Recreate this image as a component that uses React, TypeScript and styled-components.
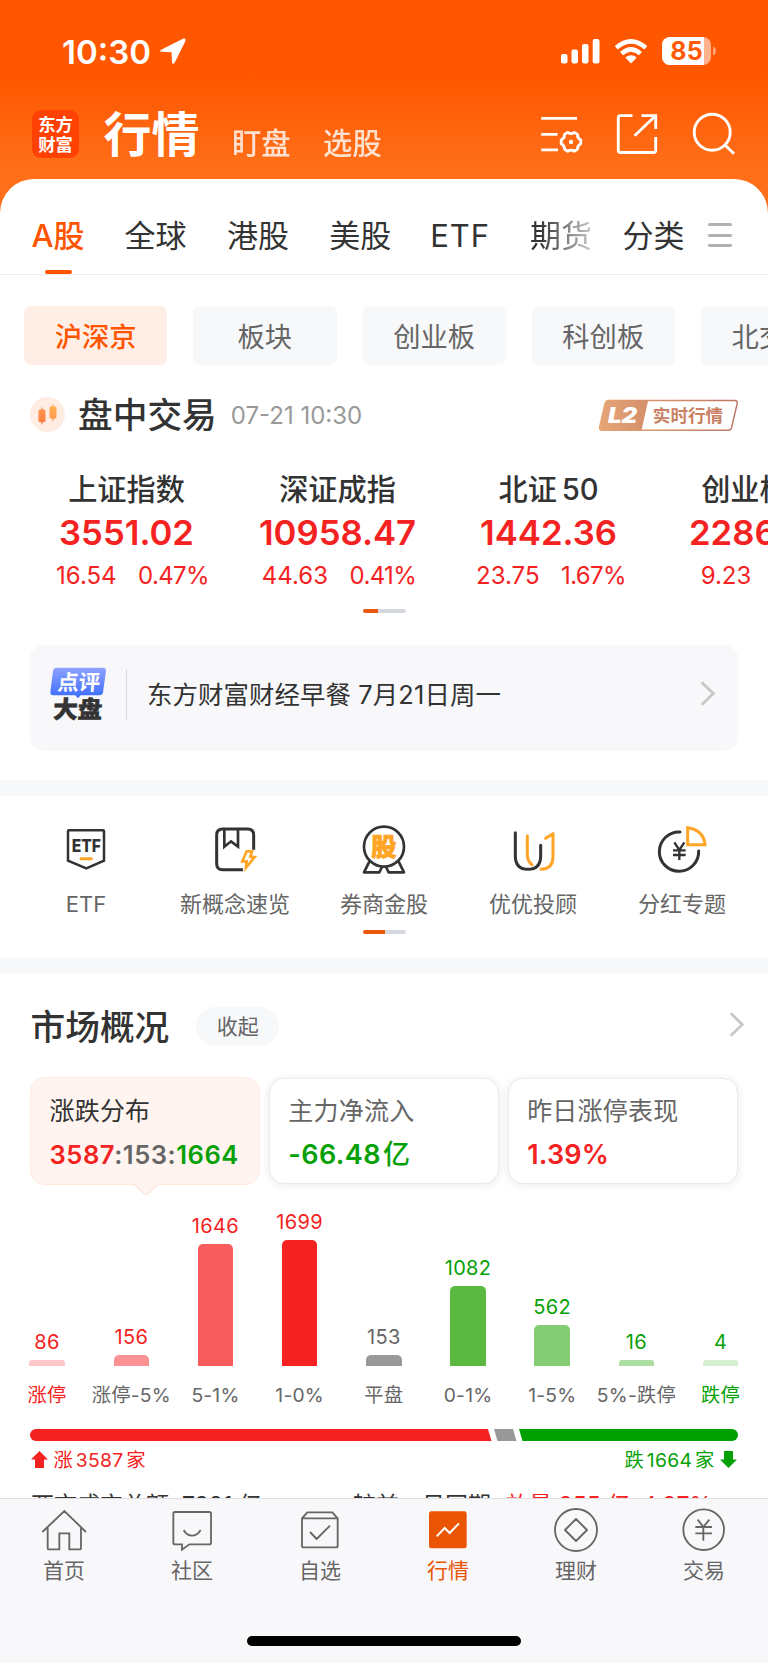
import React from "react";
import styled, { createGlobalStyle } from "styled-components";

const RED = "#f52222";
const GREEN = "#06a106";
const ORANGE = "#ff5500";
const INK = "#333333";
const GRAY = "#666666";

const Global = createGlobalStyle`
  * { box-sizing: border-box; }
  body { margin: 0; background: #fff; }
`;

const Page = styled.div`
  width: 768px;
  height: 1663px;
  display: flex;
  flex-direction: column;
  overflow: hidden;
  font-family: Inter, "Noto Sans CJK SC", sans-serif;
  color: ${INK};
  white-space: nowrap;
  background: linear-gradient(180deg, #ff5500 0, #ff5700 78px, #ff6e18 165px, #ff701b 230px);
  svg { display: block; flex: none; overflow: visible; }
`;

const StatusBar = styled.div`
  height: 102px;
  padding: 0 52px 0 62px;
  display: flex;
  align-items: center;
  color: #fff;
`;
const Clock = styled.span`
  width: 97.5px;
  padding-top: 1px;
  font-size: 33px;
  font-weight: 600;
`;
const StatusIcons = styled.div`
  margin-left: auto;
  display: flex;
  align-items: center;
  gap: 14px;
`;

const TopNav = styled.header`
  height: 77px;
  padding: 0 33px 0 32px;
  display: flex;
  color: #fff;
`;
const Logo = styled.div`
  width: 47px;
  height: 48px;
  margin-top: 8px;
  border-radius: 9px;
  background: #ff4203;
  display: flex;
  flex-direction: column;
  justify-content: center;
  align-items: center;
  font-family: "Noto Sans CJK SC", sans-serif;
  font-weight: 700;
  font-size: 17.3px;
  line-height: 20px;
`;
const PageTitle = styled.h1`
  margin: 0 0 0 24.5px;
  font-size: 48px;
  line-height: 66px;
  font-weight: 700;
`;
const SubTitle = styled.span`
  margin-left: 32.5px;
  font-size: 29.3px;
  line-height: 84px;
  font-weight: 500;
  opacity: 0.8;
`;
const NavIcons = styled.div`
  margin: 10px 0 0 auto;
  display: flex;
  gap: 34px;
  height: 44px;
`;

const Sheet = styled.main`
  flex: 1;
  min-height: 0;
  overflow: hidden;
  background: #fff;
  border-radius: 34px 34px 0 0;
`;

const Tabs = styled.nav`
  height: 96px;
  padding-left: 31.5px;
  display: grid;
  grid-template-columns: 93px 102.5px 102.3px 101px 99.7px 92.5px 86px 24px;
  border-bottom: 1px solid #ededee;
`;
const Tab = styled.span<{ $active?: boolean; $fade?: boolean; $spacing?: number }>`
  position: relative;
  justify-self: start;
  font-size: 31px;
  line-height: 113px;
  height: 95px;
  letter-spacing: ${(p) => p.$spacing ?? 0}px;
  font-weight: ${(p) => (p.$active ? 500 : 400)};
  color: ${(p) => (p.$active ? ORANGE : INK)};
  ${(p) => p.$fade && "mask-image: linear-gradient(90deg, #000 15%, rgba(0,0,0,0.3) 95%);"}
  &::after {
    content: "";
    display: ${(p) => (p.$active ? "block" : "none")};
    position: absolute;
    left: 13px;
    bottom: 0;
    width: 27.5px;
    height: 4px;
    border-radius: 2px;
    background: ${ORANGE};
  }
`;
const MenuIcon = styled.div`
  margin-top: 44px;
  height: 24px;
  display: flex;
  flex-direction: column;
  justify-content: space-between;
  i { height: 3px; border-radius: 2px; background: #b0b0b0; }
`;

const Chips = styled.div`
  margin-top: 31px;
  padding-left: 24px;
  display: flex;
  gap: 25.8px;
`;
const Chip = styled.span<{ $active?: boolean }>`
  flex: none;
  width: 143.4px;
  height: 59px;
  line-height: 63px;
  border-radius: 7px;
  text-align: center;
  font-size: 27.3px;
  font-weight: ${(p) => (p.$active ? 500 : 400)};
  color: ${(p) => (p.$active ? ORANGE : GRAY)};
  background: ${(p) => (p.$active ? "#ffeee6" : "#f7f8fa")};
`;

const SessionRow = styled.div`
  height: 99px;
  padding: 0 30px;
  display: flex;
  align-items: center;
  > svg:last-child { margin-left: auto; }
`;
const CandleBadge = styled.svg`
  margin-right: 13px;
`;
const SectionTitle = styled.h2`
  margin: 0;
  font-size: 34.7px;
  line-height: 48px;
  font-weight: 500;
`;
const Stamp = styled.span`
  margin-left: 14px;
  padding-top: 2px;
  font-size: 24px;
  color: #999;
`;

const Indices = styled.div`
  display: flex;
  padding-left: 21px;
`;
const IndexCol = styled.div`
  flex: none;
  width: 211px;
  text-align: center;
`;
const IndexName = styled.div`
  padding-top: 1px;
  font-size: 29.2px;
  font-weight: 500;
  line-height: 50px;
  word-spacing: -3px;
`;
const IndexValue = styled.div`
  font-size: 34.7px;
  font-weight: 600;
  line-height: 34px;
  color: ${RED};
`;
const IndexChange = styled.div<{ $indent: number }>`
  display: flex;
  justify-content: center;
  gap: 21.5px;
  padding-left: ${(p) => p.$indent}px;
  font-size: 24px;
  line-height: 53px;
  color: ${RED};
  span:last-child { letter-spacing: -0.65px; }
`;

const Pager = styled.div<{ $top: number; $done: number }>`
  width: 43px;
  height: 4px;
  margin: ${(p) => p.$top}px auto 0;
  border-radius: 2px;
  background: linear-gradient(90deg, #e8590c ${(p) => p.$done}%, #d6d8df ${(p) => p.$done}%);
`;

const Notice = styled.div`
  margin: 32px 30px 0;
  height: 106px;
  border-radius: 14px;
  background: #f8f8fb;
  display: flex;
  align-items: center;
  padding: 0 23px 8px 20px;
  > svg:last-child { margin: 0 0 2px auto; }
`;
const Divider = styled.i`
  width: 1px;
  height: 51px;
  margin: 0 20px;
  background: #d8d8da;
`;
const NoticeText = styled.span`
  padding-bottom: 3px;
  font-size: 25.4px;
  letter-spacing: 0.12px;
`;

const Band = styled.div<{ $top: number; $h: number }>`
  margin-top: ${(p) => p.$top}px;
  height: ${(p) => p.$h}px;
  background: #f6f8fa;
`;

const Shortcuts = styled.div`
  padding: 30px 11.5px 0;
  display: grid;
  grid-template-columns: repeat(5, 149px);
`;
const Shortcut = styled.div`
  display: flex;
  flex-direction: column;
  align-items: center;
  gap: 15px;
  font-size: 22px;
  line-height: 30px;
  color: ${GRAY};
`;

const OverviewHead = styled.div`
  height: 104px;
  padding: 4px 24px 0 30.5px;
  display: flex;
  align-items: center;
  > svg { margin: 0 0 6px auto; }
`;
const Fold = styled.button`
  width: 83px;
  height: 39px;
  margin-left: 27px;
  margin-bottom: 1px;
  padding: 0;
  border: 0;
  border-radius: 20px;
  background: #f6f8fa;
  font: 400 21px/37px Inter, "Noto Sans CJK SC", sans-serif;
  color: ${GRAY};
`;

const Cards = styled.div`
  height: 108px;
  margin: 0 30px;
  display: flex;
  gap: 8.5px;
  align-items: flex-start;
`;
const Card = styled.div<{ $active?: boolean }>`
  position: relative;
  width: 230.5px;
  height: ${(p) => (p.$active ? 108 : 106)}px;
  margin-top: ${(p) => (p.$active ? 0 : 1)}px;
  padding: ${(p) => (p.$active ? "16px 0 0 18.5px" : "15px 0 0 18.5px")};
  border: 1.5px solid ${(p) => (p.$active ? "#ffe9df" : "#ebebeb")};
  border-radius: 15px;
  background: ${(p) => (p.$active ? "#fff4f0" : "#fff")};
  box-shadow: ${(p) => (p.$active ? "none" : "0 1px 10px rgba(0,0,0,0.09)")};
`;
const Pointer = styled.svg`
  position: absolute;
  left: 100.5px;
  top: 104px;
`;
const CardTitle = styled.div<{ $active?: boolean }>`
  font-size: 25px;
  line-height: 34px;
  letter-spacing: 0.2px;
  color: ${(p) => (p.$active ? INK : GRAY)};
`;
const CardValue = styled.div<{ $color: string; $size: number; $spacing: number }>`
  margin-top: 5px;
  font-size: ${(p) => p.$size}px;
  line-height: 43px;
  font-weight: 600;
  letter-spacing: ${(p) => p.$spacing}px;
  color: ${(p) => p.$color};
  span { color: ${GRAY}; }
  b { font-weight: 600; color: ${GREEN}; }
  em { font-style: normal; font-weight: 500; margin-left: 2px; }
`;

const Chart = styled.div`
  height: 181px;
  padding: 0 5px;
  display: grid;
  grid-template-columns: repeat(9, 84.2px);
  align-items: end;
`;
const BarCol = styled.div<{ $color: string }>`
  display: flex;
  flex-direction: column;
  align-items: center;
  gap: 3px;
  font-size: 20px;
  line-height: 30px;
  letter-spacing: 0.35px;
  color: ${(p) => p.$color};
`;
const Bar = styled.div<{ $h: number; $fill: string }>`
  width: 35.5px;
  height: ${(p) => p.$h}px;
  border-radius: ${(p) => Math.min(5, p.$h * 0.45)}px ${(p) => Math.min(5, p.$h * 0.45)}px 0 0;
  background: ${(p) => p.$fill};
`;
const AxisRow = styled.div`
  height: 56px;
  padding: 0 5px;
  display: grid;
  grid-template-columns: repeat(9, 84.2px);
  justify-items: center;
  font-size: 19.3px;
  line-height: 58px;
  letter-spacing: 0.2px;
`;
const AxisLabel = styled.span<{ $color: string }>`
  color: ${(p) => p.$color};
`;

const RatioBar = styled.div`
  margin: 7px 30px 0;
  height: 12px;
`;
const Legend = styled.div`
  height: 37px;
  margin: 0 31px;
  display: flex;
  justify-content: space-between;
  font-size: 19.3px;
  line-height: 38px;
`;
const LegendItem = styled.span<{ $color: string }>`
  display: flex;
  align-items: center;
  gap: 5.5px;
  letter-spacing: 0.3px;
  word-spacing: -3px;
  color: ${(p) => p.$color};
`;
const Turnover = styled.div`
  margin: 0 31px;
  display: grid;
  grid-template-columns: 322px 153px 136px auto;
  font-size: 23px;
  line-height: 54px;
  color: ${INK};
  span { color: ${RED}; }
`;

const BottomNav = styled.nav`
  height: 165px;
  border-top: 1px solid #dfdfe3;
  background: #f8f8fb;
  display: flex;
  flex-direction: column;
`;
const BottomItems = styled.div`
  display: grid;
  grid-template-columns: repeat(6, 128px);
  padding-top: 7px;
`;
const BottomItem = styled.div<{ $active?: boolean }>`
  display: flex;
  flex-direction: column;
  align-items: center;
  font-size: 21px;
  line-height: 34px;
  color: ${(p) => (p.$active ? "#ea5504" : GRAY)};
`;
const HomeBar = styled.div`
  width: 274px;
  height: 10px;
  margin: 48px auto 0;
  border-radius: 5px;
  background: #000;
`;

const Chevron = () => (
  <svg width="15" height="25" viewBox="0 0 15 25" fill="none" stroke="#c8c8c8" strokeWidth="2.8">
    <path d="M1.7 1.2 13.3 12.5 1.7 23.8" />
  </svg>
);

const Glyph = ({ cx, cy, children }: { cx: number; cy: number; children: React.ReactNode }) => (
  <svg width="48" height="48" viewBox={`${cx - 72} ${cy - 72} 144 144`} fill="none" stroke="#333" strokeWidth="9">
    {children}
  </svg>
);

const shortcuts = [
  {
    label: "ETF",
    icon: (
      <Glyph cx={258} cy={660}>
        <path d="M207 601H309Q312 601 312 604V692L259 715 204 692V604Q204 601 207 601Z" strokeWidth="7.5" />
        <text x="215" y="667" fontSize="53" fontWeight="800" textLength="88" lengthAdjust="spacingAndGlyphs" fill="#333" stroke="none">ETF</text>
        <path d="M243 686H274" stroke="#ffa425" strokeLinecap="round" />
      </Glyph>
    ),
  },
  {
    label: "新概念速览",
    icon: (
      <Glyph cx={705} cy={660}>
        <path d="M729 719H668Q650 719 650 701V615Q650 597 668 597H743Q761 597 761 615V659" />
        <path d="M673 600V650L693 634 714 650V600" strokeWidth="8" />
        <path d="M740 664H756L751 681H764L738 713 740 694H727Z" stroke="#ffa425" strokeWidth="8" />
      </Glyph>
    ),
  },
  {
    label: "券商金股",
    icon: (
      <Glyph cx={1152} cy={660}>
        <circle cx="1152" cy="650" r="60" strokeWidth="8" />
        <path d="M1108 695 1092 727H1138L1146 711M1196 695 1212 727H1166L1158 711" strokeWidth="8" strokeLinejoin="round" />
        <text x="1152" y="678" fontSize="76" fontWeight="900" textAnchor="middle" fill="#ffa425" stroke="#ffa425" strokeWidth="2">股</text>
      </Glyph>
    ),
  },
  {
    label: "优优投顾",
    icon: (
      <Glyph cx={447} cy={660}>
        <g strokeLinecap="round" strokeLinejoin="round">
          <path d="M430 617V672Q430 694 444 704" stroke="#ffa425" />
          <path d="M485 625 507 611V680Q507 716 471 718" stroke="#ffa425" />
          <path d="M394 608V678Q394 718 432 718T470 678V646" />
        </g>
      </Glyph>
    ),
  },
  {
    label: "分红专题",
    icon: (
      <Glyph cx={894} cy={660}>
        <path d="M888 606A59 59 0 1 0 944 663" strokeLinecap="round" />
        <path d="M911 593V644H963Q959 600 911 593Z" stroke="#ffa425" />
        <path d="M871 637 886 660 901 637M886 660V690M867 661H905M867 675H905" strokeWidth="7" />
      </Glyph>
    ),
  },
];

const bottomItems = [
  {
    label: "首页",
    icon: (
      <Glyph cx={192} cy={180}>
        <path d="M127 186 193 123 258 186M143 172V235Q143 238 146 238H178V190H208V238H240Q243 238 243 235V172" stroke="#666" strokeWidth="5.5" />
      </Glyph>
    ),
  },
  {
    label: "社区",
    icon: (
      <Glyph cx={576} cy={180}>
        <path d="M525 126H628Q633 126 633 131V218Q633 223 628 223H568L546 239V223H525Q520 223 520 218V131Q520 126 525 126ZM551 180Q560 197 576 197T602 180" stroke="#666" strokeWidth="5.5" />
      </Glyph>
    ),
  },
  {
    label: "自选",
    icon: (
      <Glyph cx={960} cy={180}>
        <path d="M906 145 922 127H997L1013 145V227Q1013 232 1008 232H911Q906 232 906 227ZM906 145H1013M930 186 950 207 990 167" stroke="#666" strokeWidth="5.5" strokeLinejoin="round" />
      </Glyph>
    ),
  },
  {
    label: "行情",
    active: true,
    icon: (
      <Glyph cx={192} cy={180}>
        <rect x="135" y="124" width="113" height="111" rx="7" fill="#ea5504" stroke="none" />
        <path d="M158 199 182 174 197 189 225 160" stroke="#fff" strokeWidth="6" />
      </Glyph>
    ),
  },
  {
    label: "理财",
    icon: (
      <Glyph cx={576} cy={180}>
        <circle cx="576" cy="180" r="63" stroke="#666" strokeWidth="5.5" />
        <path d="M576 147 609 180 576 213 543 180Z" stroke="#666" strokeWidth="5.5" strokeLinejoin="round" />
      </Glyph>
    ),
  },
  {
    label: "交易",
    icon: (
      <Glyph cx={960} cy={180}>
        <circle cx="959" cy="179" r="61" stroke="#666" strokeWidth="5.5" />
        <path d="M941 149 958 171 976 149M958 171V212M934 171H984M934 190H984" stroke="#666" strokeWidth="5.5" />
      </Glyph>
    ),
  },
];

const bars = [
  { value: 86, label: "涨停", h: 6.5, fill: "#fdc8c8", color: RED, axis: RED },
  { value: 156, label: "涨停-5%", h: 11.5, fill: "#fa9192", color: RED, axis: GRAY },
  { value: 1646, label: "5-1%", h: 122, fill: "#f85c5d", color: RED, axis: GRAY },
  { value: 1699, label: "1-0%", h: 126, fill: "#f52222", color: RED, axis: GRAY },
  { value: 153, label: "平盘", h: 11.5, fill: "#999999", color: GRAY, axis: GRAY },
  { value: 1082, label: "0-1%", h: 80, fill: "#5bb942", color: GREEN, axis: GRAY },
  { value: 562, label: "1-5%", h: 41.5, fill: "#84cd74", color: GREEN, axis: GRAY },
  { value: 16, label: "5%-跌停", h: 6, fill: "#addea3", color: GREEN, axis: GRAY },
  { value: 4, label: "跌停", h: 6, fill: "#d6efd1", color: GREEN, axis: GREEN },
];

const indices = [
  { name: "上证指数", value: "3551.02", diff: "16.54", pct: "0.47%", indent: 12 },
  { name: "深证成指", value: "10958.47", diff: "44.63", pct: "0.41%", indent: 3 },
  { name: "北证 50", value: "1442.36", diff: "23.75", pct: "1.67%", indent: 5 },
  { name: "创业板指", value: "2286.38", diff: "9.23", pct: "0.41%", indent: 21 },
];

export default function App() {
  return (
    <Page>
      <Global />
      <StatusBar>
        <Clock>10:30</Clock>
        <svg width="26" height="26" viewBox="0 0 26 26" fill="#fff">
          <path d="M23 .7 1.6 11.4C-.6 12.6-.1 13.7 1.8 13.8L11.5 14.3 12 24.2C12.1 26.2 13.8 26.2 14.8 24.4L25.3 3.2C26.2 1.1 25-.2 23 .7Z" />
        </svg>
        <StatusIcons>
          <svg width="39" height="25" viewBox="0 0 39 25" fill="#fff">
            <rect x="0" y="15" width="6.5" height="9.5" rx="2" />
            <rect x="10.5" y="10.5" width="6.5" height="14" rx="2" />
            <rect x="21" y="5" width="6.5" height="19.5" rx="2" />
            <rect x="31.7" y="0" width="6.8" height="24.5" rx="2" />
          </svg>
          <svg width="34" height="25" viewBox="0 0 34 25">
            <g fill="none" stroke="#fff" strokeWidth="4.6">
              <path d="M2.2 8.8Q17 -4 31.8 8.8" />
              <path d="M7.6 14.6Q17 6 26.4 14.6" />
            </g>
            <path d="M11.3 18.6Q17 14 22.7 18.6L17 24.5Z" fill="#fff" />
          </svg>
          <svg width="54" height="28" viewBox="0 0 54 28">
            <defs>
              <clipPath id="cell"><rect width="49" height="28" rx="8" /></clipPath>
            </defs>
            <rect width="49" height="28" rx="8" fill="#ffb18c" />
            <rect width="42" height="28" fill="#fff" clipPath="url(#cell)" />
            <path d="M51 9.5Q54 10.5 54 14T51 18.5Z" fill="#ffa077" />
            <text x="24.5" y="23" textAnchor="middle" fontSize="25" fontWeight="700" fill="#ff5a05">85</text>
          </svg>
        </StatusIcons>
      </StatusBar>

      <TopNav>
        <Logo>
          <span>东方</span>
          <span>财富</span>
        </Logo>
        <PageTitle>行情</PageTitle>
        <SubTitle>盯盘</SubTitle>
        <SubTitle>选股</SubTitle>
        <NavIcons>
          <svg width="42" height="42" viewBox="0 0 42 42" fill="none" stroke="#fff" strokeWidth="2.8">
            <path d="M.2 6.3H36M.2 22.3H16.5M.2 37.8H17" />
            <path d="M26.8 20.4Q30 22.8 33.2 20.4L36.4 22.2Q36.3 26.2 39.8 28V31.8Q36.3 33.4 36.4 37.4L33.2 39.3Q30 37 26.8 39.3L23.6 37.4Q23.7 33.4 20.2 31.8V28Q23.7 26.2 23.6 22.2Z" strokeLinejoin="round" />
            <circle cx="30" cy="29.9" r="2.2" fill="#fff" stroke="none" />
          </svg>
          <svg width="42" height="42" viewBox="1 0 42 42" fill="none" stroke="#fff" strokeWidth="2.9">
            <path d="M16.5 3.6H4.5Q2.3 3.6 2.3 5.8V38.300Q2.3 40.5 4.500 40.500H37.500Q39.700 40.500 39.700 38.300V25M25.500 3.600H39.700V17M39 4.300 18.600 23.800" />
          </svg>
          <svg width="42" height="42" viewBox="0 0 42 42" fill="none" stroke="#fff" strokeWidth="2.9">
            <circle cx="19.2" cy="20.3" r="18" />
            <path d="M32 33 41 41.8" />
          </svg>
        </NavIcons>
      </TopNav>

      <Sheet>
        <Tabs>
          <Tab $active>A股</Tab>
          <Tab>全球</Tab>
          <Tab>港股</Tab>
          <Tab>美股</Tab>
          <Tab $spacing={0.9}>ETF</Tab>
          <Tab $fade>期货</Tab>
          <Tab>分类</Tab>
          <MenuIcon><i /><i /><i /></MenuIcon>
        </Tabs>

        <Chips>
          <Chip $active>沪深京</Chip>
          <Chip>板块</Chip>
          <Chip>创业板</Chip>
          <Chip>科创板</Chip>
          <Chip>北交所</Chip>
        </Chips>

        <SessionRow>
          <CandleBadge width="35" height="35" viewBox="0 0 35 35">
            <defs>
              <linearGradient id="candleA" x1="0" y1="0" x2="0" y2="1">
                <stop offset="0" stopColor="#ff9c58" />
                <stop offset="1" stopColor="#f97738" />
              </linearGradient>
              <linearGradient id="candleB" x1="0" y1="0" x2="0" y2="1">
                <stop offset="0" stopColor="#ffb44f" />
                <stop offset="1" stopColor="#ff9650" />
              </linearGradient>
            </defs>
            <circle cx="17.5" cy="17.5" r="17.5" fill="#ffece3" />
            <path d="M12 9.6 13 12.5H14Q15.5 12.5 15.5 14V23.5Q15.5 25 14 25H13L12 28 11 25H10Q8.5 25 8.5 23.5V14Q8.5 12.5 10 12.5H11Z" fill="url(#candleA)" />
            <path d="M23 6.6 24 9.5H25Q26.5 9.5 26.5 11V20Q26.5 21.5 25 21.5H24L23 25 22 21.5H21Q19.5 21.5 19.5 20V11Q19.5 9.5 21 9.5H22Z" fill="url(#candleB)" />
          </CandleBadge>
          <SectionTitle>盘中交易</SectionTitle>
          <Stamp>07-21 10:30</Stamp>
          <svg width="139.5" height="32" viewBox="644 324 420 96">
            <defs>
              <linearGradient id="bronze" x1="0" x2="1">
                <stop offset="0" stopColor="#e5a573" />
                <stop offset="1" stopColor="#bd7860" />
              </linearGradient>
              <linearGradient id="bronzeFill" x1="0" x2="1">
                <stop offset="0" stopColor="#e6a676" />
                <stop offset="1" stopColor="#d58f6b" />
              </linearGradient>
            </defs>
            <path d="M674 328H1052Q1062 328 1060 338L1043 410Q1041 418 1032 418H654Q644 418 646 408L662 338Q664 328 674 328Z" fill="#fff" stroke="url(#bronze)" strokeWidth="4.5" />
            <path d="M674 328H792L772 418H654Q644 418 646 408L662 338Q664 328 674 328Z" fill="url(#bronzeFill)" />
            <text x="671" y="397" fontSize="64" fontWeight="900" fontStyle="italic" textLength="88" lengthAdjust="spacingAndGlyphs" fill="#fff">L2</text>
            <text x="806" y="393" fontSize="53" fontWeight="700" fill="#ca8063">实时行情</text>
          </svg>
        </SessionRow>

        <Indices>
          {indices.map((i) => (
            <IndexCol key={i.name}>
              <IndexName>{i.name}</IndexName>
              <IndexValue>{i.value}</IndexValue>
              <IndexChange $indent={i.indent}>
                <span>{i.diff}</span>
                <span>{i.pct}</span>
              </IndexChange>
            </IndexCol>
          ))}
        </Indices>
        <Pager $top={7} $done={36} />

        <Notice>
          <svg width="56" height="54" viewBox="150 112 168 162">
            <defs>
              <linearGradient id="bubble" x1="0" y1="0" x2="0" y2="1">
                <stop offset="0" stopColor="#8fa2ff" />
                <stop offset="1" stopColor="#3a6cff" />
              </linearGradient>
            </defs>
            <path d="M170 114H308Q319 114 318 124L309 188Q308 197 298 197H242L234 206 226 197H160Q150 197 151 187L159 124Q160 114 170 114Z" fill="url(#bubble)" />
            <text transform="translate(171 180) skewX(-4)" x="0" y="0" fontSize="64" fontWeight="700" fill="#fff">点评</text>
            <text transform="translate(158 265) skewX(-3)" x="0" y="0" fontSize="72" fontWeight="900" textLength="148" lengthAdjust="spacingAndGlyphs" fill="#333" stroke="#333" strokeWidth="1.5">大盘</text>
          </svg>
          <Divider />
          <NoticeText>东方财富财经早餐 7月21日周一</NoticeText>
          <Chevron />
        </Notice>

        <Band $top={29} $h={16} />

        <Shortcuts>
          {shortcuts.map((s) => (
            <Shortcut key={s.label}>
              {s.icon}
              {s.label}
            </Shortcut>
          ))}
        </Shortcuts>
        <Pager $top={11} $done={50} />

        <Band $top={24} $h={15} />

        <OverviewHead>
          <SectionTitle>市场概况</SectionTitle>
          <Fold>收起</Fold>
          <Chevron />
        </OverviewHead>

        <Cards>
          <Card $active>
            <CardTitle $active>涨跌分布</CardTitle>
            <CardValue $color={RED} $size={25.6} $spacing={0.5}>
              3587<span>:153:</span><b>1664</b>
            </CardValue>
            <Pointer width="28" height="14" viewBox="0 0 28 14">
              <path d="M0 0 1.5 1.5 11 11Q14 14 17 11L26.5 1.5 28 0Z" fill="#fff4f0" />
              <path d="M1.5 1.5 11 11Q14 14 17 11L26.5 1.5" fill="none" stroke="#ffe9df" strokeWidth="1.5" />
            </Pointer>
          </Card>
          <Card>
            <CardTitle>主力净流入</CardTitle>
            <CardValue $color={GREEN} $size={27} $spacing={0.4}>
              -66.48<em>亿</em>
            </CardValue>
          </Card>
          <Card>
            <CardTitle>昨日涨停表现</CardTitle>
            <CardValue $color={RED} $size={27} $spacing={0.2}>1.39%</CardValue>
          </Card>
        </Cards>

        <Chart>
          {bars.map((b) => (
            <BarCol key={b.label} $color={b.color}>
              {b.value}
              <Bar $h={b.h} $fill={b.fill} />
            </BarCol>
          ))}
        </Chart>
        <AxisRow>
          {bars.map((b) => (
            <AxisLabel key={b.label} $color={b.axis}>{b.label}</AxisLabel>
          ))}
        </AxisRow>

        <RatioBar>
          <svg width="708" height="12" viewBox="0 0 708 12">
            <path d="M6 0H458L461.5 12H6A6 6 0 0 1 6 0Z" fill={RED} />
            <path d="M464 0H483L486.5 12H467.5Z" fill="#999" />
            <path d="M489 0H702A6 6 0 0 1 702 12H492.5Z" fill="#02a102" />
          </svg>
        </RatioBar>
        <Legend>
          <LegendItem $color={RED}>
            <svg width="17" height="17" viewBox="0 0 17 17" fill={RED}>
              <path d="M8.5 0 17 8.5H13V17H4V8.5H0Z" />
            </svg>
            涨 3587 家
          </LegendItem>
          <LegendItem $color={GREEN}>
            跌 1664 家
            <svg width="17" height="17" viewBox="0 0 17 17" fill={GREEN}>
              <path d="M8.5 17 0 8.5H4V0H13V8.5H17Z" />
            </svg>
          </LegendItem>
        </Legend>
        <Turnover>
          <div>两市成交总额&nbsp; 7381 亿</div>
          <div>较前一日同期</div>
          <span>放量 855 亿</span>
          <span>4.87%</span>
        </Turnover>
      </Sheet>

      <BottomNav>
        <BottomItems>
          {bottomItems.map((b) => (
            <BottomItem key={b.label} $active={b.active}>
              {b.icon}
              {b.label}
            </BottomItem>
          ))}
        </BottomItems>
        <HomeBar />
      </BottomNav>
    </Page>
  );
}
